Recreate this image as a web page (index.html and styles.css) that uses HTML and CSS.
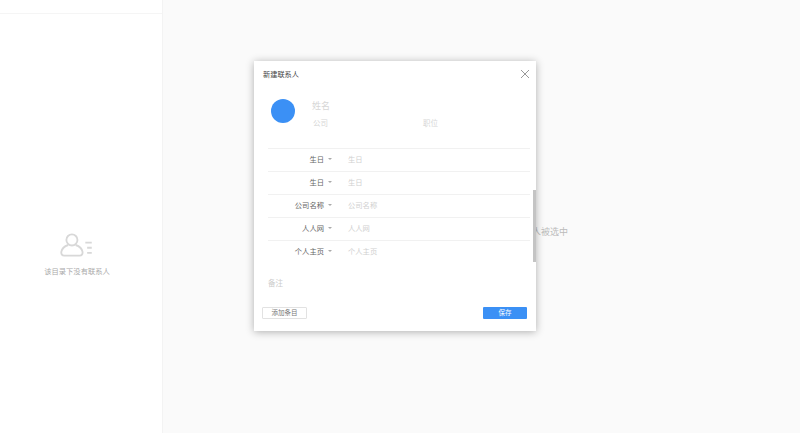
FILE: index.html
```html
<!DOCTYPE html>
<html lang="zh-CN">
<head>
  <meta charset="UTF-8">
  <title>新建联系人</title>
  <link rel="stylesheet" href="styles.css">
</head>
<body>
  <div class="app">
    <div class="sidebar">
      <div class="search-bar"></div>
      <div class="empty">
        <svg class="empty-icon" width="34" height="24" viewBox="0 0 36 26" fill="none" stroke="#d8d8d8" stroke-width="2">
          <circle cx="12.500" cy="7.500" r="6"/>
          <path d="M8.500 13C4 14.500 1.500 17.500 1 20.500C.7 23 2 24.500 4 24.500H21C23 24.500 24.300 23 24 20.500C23.500 17.500 21 14.500 16.500 13"/>
          <path d="M27 10.500H34M29 16H34M29 21.500H34"/>
        </svg>
        <div class="empty-text">该目录下没有联系人</div>
      </div>
    </div>
    <div class="main">
      <div class="main-tip">没有联系人被选中</div>
    </div>
  </div>

  <!-- 新建联系人 -->
  <div class="dialog">
    <div class="dialog-head">
      <span class="dialog-title">新建联系人</span>
      <svg class="dialog-close" width="10" height="10" viewBox="0 0 10 10" stroke="#999" stroke-width="1">
        <path d="M1 1L9 9M9 1L1 9"/>
      </svg>
    </div>
    <div class="profile">
      <div class="avatar"></div>
      <div class="profile-fields">
        <div class="field-name">姓名</div>
        <div class="field-org">
          <span class="field-company">公司</span>
          <span>职位</span>
        </div>
      </div>
    </div>
    <div class="form-rows">
      <div class="form-row">
        <span class="row-label">生日</span><span class="row-caret"></span><span class="row-value">生日</span>
      </div>
      <div class="form-row">
        <span class="row-label">生日</span><span class="row-caret"></span><span class="row-value">生日</span>
      </div>
      <div class="form-row">
        <span class="row-label">公司名称</span><span class="row-caret"></span><span class="row-value">公司名称</span>
      </div>
      <div class="form-row">
        <span class="row-label">人人网</span><span class="row-caret"></span><span class="row-value">人人网</span>
      </div>
      <div class="form-row">
        <span class="row-label">个人主页</span><span class="row-caret"></span><span class="row-value">个人主页</span>
      </div>
    </div>
    <div class="note">备注</div>
    <div class="dialog-foot">
      <button class="btn-add">添加条目</button>
      <button class="btn-save">保存</button>
    </div>
    <div class="scrollbar"></div>
  </div>
</body>
</html>
```

FILE: styles.css
```css
html, body {
  margin: 0;
  padding: 0;
  height: 100%;
  overflow: hidden;
}
body {
  font-family: "Liberation Sans", "Noto Sans CJK SC", sans-serif;
  background: #fff;
}
.app {
  display: flex;
  height: 433px;
}
.sidebar {
  width: 162px;
  border-right: 1px solid #f3f3f3;
  background: #fff;
  display: flex;
  flex-direction: column;
}
.search-bar {
  height: 13px;
  border-bottom: 1px solid #f5f5f5;
}
.empty {
  margin-top: 219px;
  padding-right: 8px;
  display: flex;
  flex-direction: column;
  align-items: center;
}
.empty-text {
  margin-top: 9px;
  font-size: 7.300px;
  line-height: 12px;
  color: #aaa;
}
.main {
  flex: 1;
  background: #fafafa;
  display: flex;
}
.main-tip {
  margin: 225px 0 0 333px;
  font-size: 9px;
  line-height: 14px;
  color: #bbb;
}
.dialog {
  position: absolute;
  left: 254px;
  top: 61px;
  width: 282px;
  height: 270px;
  background: #fff;
  box-shadow: 0 1px 8px rgba(0, 0, 0, 0.3);
  overflow: hidden;
}
.dialog-head {
  display: flex;
  justify-content: space-between;
  align-items: center;
  height: 26px;
  padding: 0 6px 0 9px;
}
.dialog-title {
  font-size: 7.200px;
  color: #444;
}
.profile {
  display: flex;
  align-items: flex-start;
  height: 61px;
  padding: 12px 0 0 17px;
  box-sizing: border-box;
}
.avatar {
  width: 24px;
  height: 24px;
  border-radius: 50%;
  background: #3b90f5;
}
.profile-fields {
  margin-left: 17px;
  color: #d6d6d6;
}
.field-name {
  font-size: 9px;
  line-height: 14px;
}
.field-org {
  display: flex;
  margin-top: 5px;
  font-size: 7.500px;
  line-height: 12px;
}
.field-company {
  width: 110px;
  margin-left: 1px;
}
.form-rows {
  margin: 0 6px 0 14px;
}
.form-row {
  display: flex;
  align-items: center;
  height: 23px;
  padding-bottom: 2px;
  box-sizing: border-box;
  border-top: 1px solid #f1f1f1;
  font-size: 7.300px;
}
.row-label {
  width: 56px;
  text-align: right;
  color: #666;
}
.row-caret {
  width: 0;
  height: 0;
  margin: 0 16px 0 4px;
  border-left: 2px solid transparent;
  border-right: 2px solid transparent;
  border-top: 2px solid #aaa;
}
.row-value {
  color: #d0d0d0;
}
.note {
  margin: 15px 0 0 14px;
  font-size: 7.500px;
  line-height: 12px;
  color: #ccc;
}
.dialog-foot {
  display: flex;
  justify-content: space-between;
  margin: 17px 9px 0 8px;
}
.dialog-foot button {
  height: 12px;
  padding: 0;
  border-radius: 1px;
  font-family: inherit;
  font-size: 6.500px;
  line-height: 10px;
}
.btn-add {
  width: 45px;
  background: #fff;
  border: 1px solid #e2e2e2;
  color: #777;
}
.btn-save {
  width: 44px;
  background: #3b90f5;
  border: none;
  color: #fff;
}
.scrollbar {
  position: absolute;
  right: 0;
  top: 129px;
  width: 3px;
  height: 72px;
  background: #c4c4c4;
}
```
